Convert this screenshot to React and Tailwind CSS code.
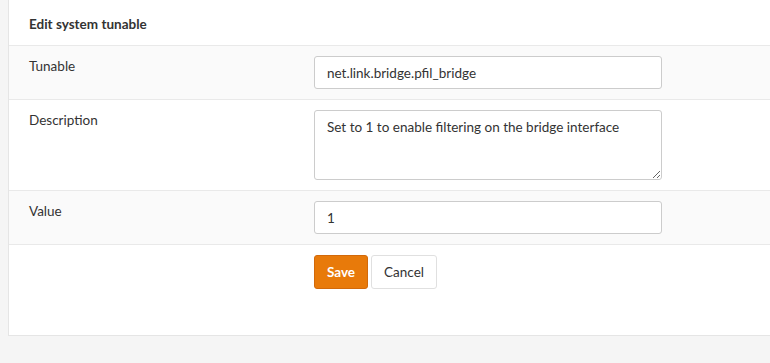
export default function App() {
  const font = { fontFamily: 'Lato, "Noto Sans", sans-serif' };
  return (
    <div className="w-[770px] h-[363px] bg-[#f5f5f5] overflow-hidden text-[13.5px] text-[#333]" style={font}>
      <div className="ml-[8px] w-[800px] bg-white border-l border-b border-[#e5e5e5] pb-[46px]">
        <div className="h-[46px] border-b border-[#e9e9e9] pl-[20px] flex items-center pt-[3px]">
          <span className="font-bold">Edit system tunable</span>
        </div>
        <div className="flex bg-[#fafafa] border-b border-[#e9e9e9] py-[10px]">
          <div className="w-[305px] pl-[20px]">Tunable</div>
          <input
            readOnly
            value="net.link.bridge.pfil_bridge"
            className="w-[348px] h-[33px] border border-[#ccc] rounded-[3px] bg-white px-[12px] outline-none text-[#333] text-[13.5px]"
            style={font}
          />
        </div>
        <div className="flex bg-white border-b border-[#e9e9e9] py-[10px]">
          <div className="w-[305px] pl-[20px]">Description</div>
          <textarea
            readOnly
            value="Set to 1 to enable filtering on the bridge interface"
            className="w-[348px] h-[70px] border border-[#ccc] rounded-[3px] bg-white px-[12px] py-[6px] outline-none text-[#333] text-[13.5px] resize-y block"
            style={font}
          />
        </div>
        <div className="flex bg-[#fafafa] border-b border-[#e9e9e9] py-[10px]">
          <div className="w-[305px] pl-[20px]">Value</div>
          <input
            readOnly
            value="1"
            className="w-[348px] h-[33px] border border-[#ccc] rounded-[3px] bg-white px-[12px] outline-none text-[#333] text-[13.5px]"
            style={font}
          />
        </div>
        <div className="flex pt-[10px]">
          <div className="w-[305px]" />
          <div className="flex gap-[3px]">
            <button className="h-[34px] w-[54px] bg-[#e87a0a] border border-[#d2690a] rounded-[3px] text-white font-bold text-[13.5px]" style={font}>
              Save
            </button>
            <button className="h-[34px] w-[66px] bg-white border border-[#e0e0e0] rounded-[3px] text-[#333] text-[13.5px]" style={font}>
              Cancel
            </button>
          </div>
        </div>
      </div>
    </div>
  );
}
